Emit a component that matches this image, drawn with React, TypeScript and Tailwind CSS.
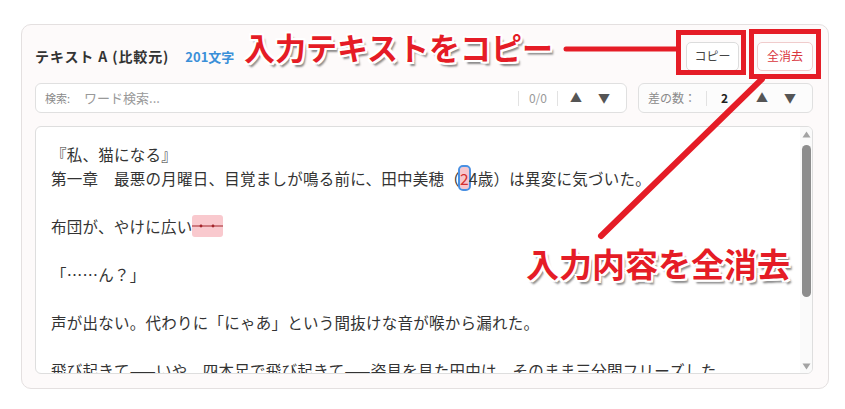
import React from "react";

const jp = "font-['Noto_Sans_CJK_JP','Noto_Sans',sans-serif]";

const Divider = () => <div className="w-px h-[15px] bg-[#e2e2e2]" />;

const Arrows = () => (
  <div className="flex items-center gap-[16px] text-[#555] text-[12px]">
    <span>▲</span>
    <span>▼</span>
  </div>
);

const Scrollbar = () => (
  <div className="w-[12px] flex flex-col items-center bg-[#fafafa] pt-[4px] pb-[3px]">
    <svg width="9" height="7" viewBox="0 0 9 7">
      <path d="M4.5 0.5 L8.5 6.5 L0.5 6.5 Z" fill="#a3a3a3" />
    </svg>
    <div className="mt-[7px] w-[9px] h-[152px] rounded-full bg-[#8d8d8d]" />
    <div className="flex-1" />
    <svg width="9" height="7" viewBox="0 0 9 7">
      <path d="M0.5 0.5 L8.5 0.5 L4.5 6.5 Z" fill="#a3a3a3" />
    </svg>
  </div>
);

const outline =
  "[text-shadow:2px_0_0_#fff,-2px_0_0_#fff,0_2px_0_#fff,0_-2px_0_#fff,2px_2px_0_#fff,-2px_-2px_0_#fff,2px_-2px_0_#fff,-2px_2px_0_#fff,3px_4px_2px_rgba(0,0,0,0.45)]";

export default function App() {
  return (
    <div className={`relative w-[845px] h-[409px] bg-white overflow-hidden ${jp}`}>
      <div className="ml-[21px] mt-[24px] w-[808px] h-[365px] rounded-[10px] border border-[#e4e0e0] bg-[#fdfafa] pl-[13px] pr-[15px] flex flex-col">
        {/* header */}
        <div className="mt-[16px] h-[30px] flex items-center justify-between">
          <div className="flex items-baseline">
            <span className="text-[14px] font-bold text-[#333] tracking-[0.9px]">テキスト A (比較元)</span>
            <span className="ml-[16px] text-[13px] font-bold text-[#3a8fd8]">201文字</span>
          </div>
          <div className="flex items-center gap-[18px]">
            <button className="w-[53px] h-[29px] rounded-[5px] border border-[#dcdcdc] bg-white text-[12px] text-[#444]">
              コピー
            </button>
            <button className="w-[56px] h-[29px] rounded-[5px] border border-[#f0cccc] bg-white text-[12px] text-[#d9363e]">
              全消去
            </button>
          </div>
        </div>

        {/* search row */}
        <div className="mt-[12px] h-[30px] flex gap-[11px]">
          <div className="w-[592px] rounded-[6px] border border-[#e0e0e0] bg-white flex items-center pl-[9px] pr-[16px]">
            <span className="text-[11px] text-[#8a8a8a]">検索:</span>
            <span className="ml-[14px] text-[13px] text-[#999]">ワード検索...</span>
            <div className="flex-1" />
            <Divider />
            <span className="mx-[10px] text-[12px] text-[#999]">0/0</span>
            <Divider />
            <div className="ml-[12px]">
              <Arrows />
            </div>
          </div>
          <div className="flex-1 rounded-[6px] border border-[#e0e0e0] bg-[#fcfcfc] flex items-center pl-[9px] pr-[16px]">
            <span className="text-[12px] text-[#8a8a8a]">差の数：</span>
            <div className="ml-[10px]">
              <Divider />
            </div>
            <span className="ml-[14px] text-[12px] font-bold text-[#222]">2</span>
            <div className="flex-1" />
            <Arrows />
          </div>
        </div>

        {/* text area */}
        <div className="mt-[13px] h-[248px] rounded-[6px] border border-[#dedede] bg-white flex overflow-hidden">
          <div className="flex-1 pl-[15px] pt-[15px] text-[15.5px] leading-[24px] tracking-[0.25px] text-[#333] whitespace-pre overflow-hidden">
            <div>『私、猫になる』</div>
            <div className="h-[24px]">
              第一章　最悪の月曜日、目覚ましが鳴る前に、田中美穂（
              <span className="inline-block align-top mt-[1px] leading-[22px] rounded-[3px] outline-2 outline-[#4a90e2] bg-[#f8c6cc] text-[#d32f2f]">2</span>
              4歳）は異変に気づいた。
            </div>
            <div>&nbsp;</div>
            <div className="flex items-center h-[24px]">
              <span>布団が、やけに広い</span>
              <span className="inline-flex items-center w-[31px] h-[22px] rounded-[3px] bg-[#f9c9ce]">
                <svg width="31" height="6" viewBox="0 0 31 6">
                  <line x1="0" y1="3" x2="31" y2="3" stroke="#a3262c" strokeWidth="1.2" />
                  <circle cx="9" cy="3" r="1.4" fill="#a3262c" />
                  <circle cx="21" cy="3" r="1.4" fill="#a3262c" />
                </svg>
              </span>
            </div>
            <div>&nbsp;</div>
            <div>「……ん？」</div>
            <div>&nbsp;</div>
            <div>声が出ない。代わりに「にゃあ」という間抜けな音が喉から漏れた。</div>
            <div>&nbsp;</div>
            <div>飛び起きて——いや、四本足で飛び起きて——姿見を見た田中は、そのまま三分間フリーズした。</div>
          </div>
          <Scrollbar />
        </div>
      </div>

      {/* annotations */}
      <svg className="absolute left-0 top-0 pointer-events-none" width="845" height="409">
        <rect x="678.5" y="32.5" width="65" height="40" fill="none" stroke="#e51c26" strokeWidth="5" />
        <rect x="751.5" y="31.5" width="67" height="45" fill="none" stroke="#e51c26" strokeWidth="5" />
        <line x1="566" y1="49" x2="677" y2="49" stroke="#e51c26" strokeWidth="5" strokeLinecap="round" />
        <line x1="762" y1="79" x2="601" y2="236" stroke="#e51c26" strokeWidth="6" strokeLinecap="round" />
      </svg>
      <div
        className={`absolute left-[244px] top-[27px] text-[31px] leading-[40px] font-bold text-[#e51c26] whitespace-nowrap ${outline}`}
      >
        入力テキストをコピー
      </div>
      <div
        className={`absolute left-[526px] top-[242px] text-[33px] leading-[42px] font-bold text-[#e51c26] whitespace-nowrap ${outline}`}
      >
        入力内容を全消去
      </div>
    </div>
  );
}
